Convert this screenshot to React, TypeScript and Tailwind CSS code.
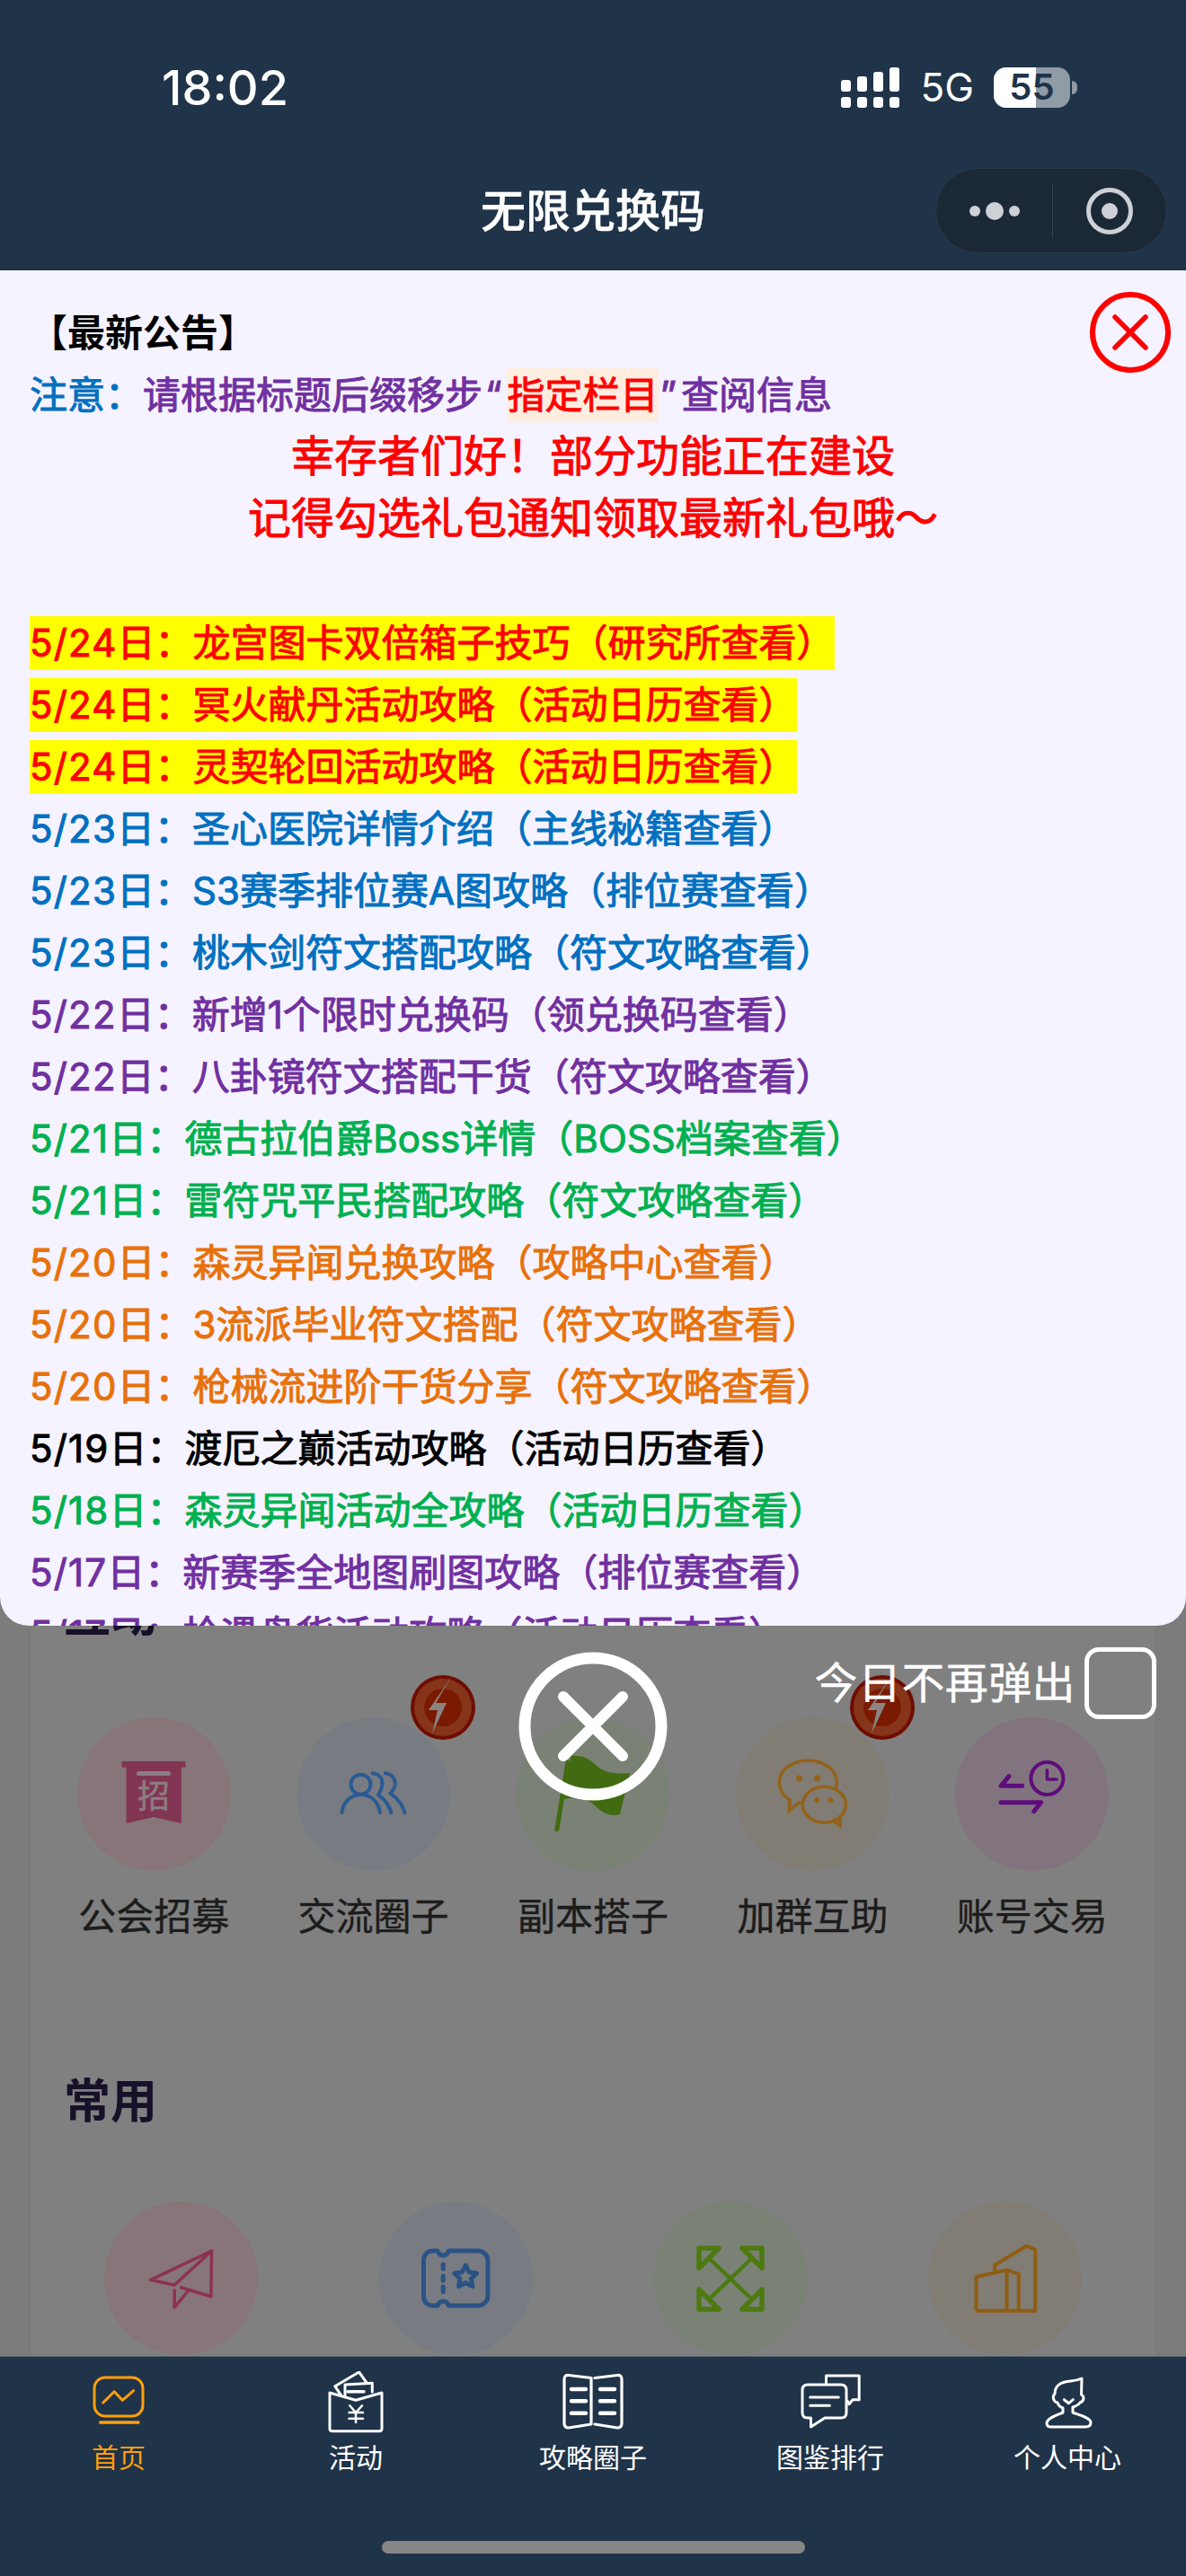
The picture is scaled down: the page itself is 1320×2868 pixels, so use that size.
const notices = [
  { date: "5/24", text: "日：龙宫图卡双倍箱子技巧（研究所查看）", color: "text-[#ff0000]", mark: true },
  { date: "5/24", text: "日：冥火献丹活动攻略（活动日历查看）", color: "text-[#ff0000]", mark: true },
  { date: "5/24", text: "日：灵契轮回活动攻略（活动日历查看）", color: "text-[#ff0000]", mark: true },
  { date: "5/23", text: "日：圣心医院详情介绍（主线秘籍查看）", color: "text-[#0070c0]" },
  { date: "5/23", text: "日：S3赛季排位赛A图攻略（排位赛查看）", color: "text-[#0070c0]" },
  { date: "5/23", text: "日：桃木剑符文搭配攻略（符文攻略查看）", color: "text-[#0070c0]" },
  { date: "5/22", text: "日：新增1个限时兑换码（领兑换码查看）", color: "text-[#7030a0]" },
  { date: "5/22", text: "日：八卦镜符文搭配干货（符文攻略查看）", color: "text-[#7030a0]" },
  { date: "5/21", text: "日：德古拉伯爵Boss详情（BOSS档案查看）", color: "text-[#00b050]" },
  { date: "5/21", text: "日：雷符咒平民搭配攻略（符文攻略查看）", color: "text-[#00b050]" },
  { date: "5/20", text: "日：森灵异闻兑换攻略（攻略中心查看）", color: "text-[#e8710a]" },
  { date: "5/20", text: "日：3流派毕业符文搭配（符文攻略查看）", color: "text-[#e8710a]" },
  { date: "5/20", text: "日：枪械流进阶干货分享（符文攻略查看）", color: "text-[#e8710a]" },
  { date: "5/19", text: "日：渡厄之巅活动攻略（活动日历查看）", color: "text-black" },
  { date: "5/18", text: "日：森灵异闻活动全攻略（活动日历查看）", color: "text-[#00b050]" },
  { date: "5/17", text: "日：新赛季全地图刷图攻略（排位赛查看）", color: "text-[#7030a0]" },
  { date: "5/17", text: "日：枪遇盘货活动攻略（活动日历查看）", color: "text-[#7030a0]" },
];

const BannerIcon = () => (
  <svg viewBox="0 0 171 171" className="w-full h-full">
    <path d="M49.5 49H120.5V55.7H115.8V118L85 111L54.5 118V55.7H49.5Z" fill="#823553" />
    <rect x="66" y="60" width="38" height="5" rx="2.5" fill="#8c7d80" />
    <text x="85" y="101" textAnchor="middle" fontSize="36" fontWeight="400" stroke="#8c7d80" strokeWidth="0.6" fill="#8c7d80">招</text>
  </svg>
);

const PeopleIcon = () => (
  <svg viewBox="0 0 171 171" className="w-full h-full" fill="none" stroke="#2a5a94" strokeWidth="4" strokeLinecap="round">
    <circle cx="71.5" cy="74.7" r="11" />
    <path d="M50.5 106C52 93 62 86 71.5 86C82 86 91 93 93 106" />
    <path d="M84.5 62.3C92 63 96 68 95.5 74.7C95 80 93 83 91 86.3C98 91 103 97 105.5 106.3" />
    <path d="M98.8 62.3C106 63 110 68 109.8 74.7C109.5 79 107 82 104.5 84.7C112 90 118 97 120.5 106.3" />
  </svg>
);

const FlagIcon = () => (
  <svg viewBox="0 0 171 171" className="w-full h-full">
    <path d="M61.5 43C74 42 82 46 89 53C98 62 110 63 127 62.3L116 108C106 111 98 107 90 100C80 90 70 88 53.5 91.3Z" fill="#406b10" />
    <path d="M45.9 124.7L58 50" stroke="#406b10" strokeWidth="5" strokeLinecap="round" />
  </svg>
);

const WechatIcon = () => (
  <svg viewBox="0 0 171 171" className="w-full h-full" fill="none" stroke="#93621a" strokeWidth="3.5">
    <path d="M60 92L59.5 104L70 95C75 96 85 96.5 90 95C104 92 112.4 83 112.4 72C112.4 58.7 98 48 80.4 48C62.7 48 48.4 58.7 48.4 72C48.4 80 52 87 60 92Z" />
    <ellipse cx="98.3" cy="97.3" rx="24" ry="20" fill="#817d74" />
    <path d="M108 115L116 120.7L115.5 109" />
    <g fill="#93621a" stroke="none">
      <circle cx="70.6" cy="68" r="3.6" />
      <circle cx="90.7" cy="68" r="3.6" />
      <circle cx="90.2" cy="92.3" r="3" />
      <circle cx="105.4" cy="92.3" r="3" />
    </g>
  </svg>
);

const ExchangeIcon = () => (
  <svg viewBox="0 0 171 171" className="w-full h-full" fill="none" stroke="#5f0c7d" strokeLinecap="round" strokeLinejoin="round">
    <circle cx="102.4" cy="68" r="18" strokeWidth="4" />
    <path d="M102.4 58.7V69H113" strokeWidth="3.5" />
    <path d="M74.7 76.3H51L60 65.7" strokeWidth="5" />
    <path d="M51 94.7H95.7L87.7 104.7" strokeWidth="5" />
  </svg>
);

const PlaneIcon = () => (
  <svg viewBox="0 0 171 171" className="w-full h-full" fill="none" stroke="#8d3152" strokeWidth="3.5" strokeLinecap="round" strokeLinejoin="round">
    <path d="M119.5 55L51.5 87.3L78.2 93Z" />
    <path d="M119.5 55L118.8 105.7L85.5 95.7" />
    <path d="M78.2 99V118L93.8 99" />
  </svg>
);

const TicketIcon = () => (
  <svg viewBox="0 0 171 171" className="w-full h-full" fill="none" stroke="#2a5285" strokeWidth="5" strokeLinecap="round" strokeLinejoin="round">
    <path d="M59.5 55H65Q67 60 71.2 60Q75.5 60 77.5 55H110A11 11 0 0 1 121 66V105A11 11 0 0 1 110 116H77.5Q75.5 111 71.2 111Q67 111 65 116H59.5A10 10 0 0 1 49.5 106V65A10 10 0 0 1 59.5 55Z" />
    <path d="M71.2 70V75M71.2 83V88M71.2 95V100.5" />
    <path d="M96.2 71L100 78.7L108.6 80L102.4 86L103.8 94.5L96.2 90.5L88.6 94.5L90 86L83.8 80L92.4 78.7Z" />
  </svg>
);

const ArrowsIcon = () => (
  <svg viewBox="0 0 171 171" className="w-full h-full" fill="none" stroke="#4c7a10" strokeWidth="5.5" strokeLinejoin="round" strokeLinecap="round">
    <path d="M51 52H73L51 74Z" />
    <path d="M121 52H99L121 74Z" />
    <path d="M51 120H73L51 98Z" />
    <path d="M121 120H99L121 98Z" />
    <path d="M62 63L110 109M110 63L62 109" strokeWidth="4.5" />
  </svg>
);

const BuildingIcon = () => (
  <svg viewBox="0 0 171 171" className="w-full h-full" fill="none" stroke="#8f5d12" strokeWidth="4" strokeLinejoin="round">
    <path d="M53.5 121.7V84L87.5 76.3V121.7" />
    <path d="M87.5 76.3L100.8 80.7V121.7" />
    <path d="M74.2 79V70.7L109.2 49.7L119.2 53.3V121.7H53.5" />
  </svg>
);

const HomeTab = () => (
  <svg viewBox="0 0 80 70" className="w-[80px] h-[70px]" fill="none" stroke="#ff9f0a" strokeWidth="3" strokeLinecap="round" strokeLinejoin="round">
    <rect x="13" y="7" width="54" height="43" rx="12" />
    <path d="M22.7 35L35.2 22.7L44.2 32.3L56.7 21.7" />
    <path d="M19.6 57H62" strokeWidth="3.5" />
  </svg>
);

const ActivityTab = () => (
  <svg viewBox="0 0 80 70" className="w-[80px] h-[70px]" fill="none" stroke="#fff" strokeWidth="3" strokeLinecap="round" strokeLinejoin="round">
    <path d="M11 24V64Q11 66.7 14 66.7H66Q69 66.7 69 64V24L40 32.3Z" />
    <path d="M23.5 26.7L16.8 16.7L43.6 1L52.5 13.3" />
    <path d="M28 27V15L58.3 13.3V23" />
    <path d="M31 22.7H49" strokeWidth="3.5" />
    <path d="M33.3 38.3L40 46L47 38.3M40 46V57M32.5 46H48M32.5 52.7H48" strokeWidth="2.5" />
  </svg>
);

const BookTab = () => (
  <svg viewBox="0 0 80 70" className="w-[80px] h-[70px]" fill="none" stroke="#fff" strokeWidth="3.2" strokeLinecap="round" strokeLinejoin="round">
    <path d="M8 9Q8 4 13 4.5L38 7.5V59L13 63Q8 63 8 58Z" />
    <path d="M42 7.5L67 4.5Q72 4 72 9V58Q72 63 67 63L42 59" />
    <path d="M16 20H32M16 33.3H32M16 46.7H32M48 20H64M48 33.3H64M48 46.7H64" strokeWidth="4.5" />
  </svg>
);

const ChatTab = () => (
  <svg viewBox="0 0 80 70" className="w-[80px] h-[70px]" fill="none" stroke="#fff" strokeWidth="3" strokeLinecap="round" strokeLinejoin="round">
    <path d="M15 15H52Q58 15 58 21V46Q58 52 52 52H34L18.5 62V52H15Q9 52 9 46V21Q9 15 15 15Z" />
    <path d="M35.5 14V5H72.2V31.7H65L61 36.7L59 33" />
    <path d="M17.7 29H49.3M17.7 38.3H39.4" />
  </svg>
);

const PersonTab = () => (
  <svg viewBox="0 0 80 70" className="w-[80px] h-[70px]" fill="none" stroke="#fff" strokeWidth="3" strokeLinecap="round" strokeLinejoin="round">
    <path d="M56 8C48 12 38 10 32 14C27 17 26 21 26 25C23 28 24 34 29 35C30 38 32 40 35 41V46C28 49 17 52 17 58C17 61 19 62 22 62H60C64 62 66 60 66 57C66 52 54 49 46 46V40C49 39 52 38 54 35C59 33 59 28 55.5 26Z" />
    <path d="M36.4 31.7L41.5 35.7L46.3 31.7" />
  </svg>
);

const BoltBadge = () => (
  <svg viewBox="0 0 72 74" className="absolute left-[127px] top-[-48px] w-[72px] h-[74px]">
    <circle cx="36" cy="37" r="36" fill="#6e0d00" />
    <circle cx="36" cy="37" r="32" fill="#86351b" />
    <circle cx="36" cy="37" r="21" fill="#7a1a00" />
    <path d="M46 2L28 32H40L24 66L30 40H20Z" fill="#8c8480" />
  </svg>
);

const topItems = [
  { label: "公会招募", bg: "bg-[#877579]", icon: <BannerIcon /> },
  { label: "交流圈子", bg: "bg-[#787c82]", icon: <PeopleIcon />, badge: true },
  { label: "副本搭子", bg: "bg-[#7a8175]", icon: <FlagIcon /> },
  { label: "加群互助", bg: "bg-[#817d74]", icon: <WechatIcon />, badge: true },
  { label: "账号交易", bg: "bg-[#81747e]", icon: <ExchangeIcon /> },
];

const commonItems = [
  { bg: "bg-[#877579]", icon: <PlaneIcon /> },
  { bg: "bg-[#787c82]", icon: <TicketIcon /> },
  { bg: "bg-[#7a8175]", icon: <ArrowsIcon /> },
  { bg: "bg-[#817d74]", icon: <BuildingIcon /> },
];

const tabs = [
  { label: "首页", icon: <HomeTab />, active: true },
  { label: "活动", icon: <ActivityTab /> },
  { label: "攻略圈子", icon: <BookTab /> },
  { label: "图鉴排行", icon: <ChatTab /> },
  { label: "个人中心", icon: <PersonTab /> },
];

const App = () => {
  return (
    <div className="relative h-[2868px] w-[1320px] flex flex-col overflow-hidden bg-[#7c7c7c] font-['Inter','Noto_Sans_CJK_SC',sans-serif]">
      <header className="h-[301px] shrink-0 bg-[#1f3349] text-white">
        <div className="h-[187px] flex items-center justify-between pt-[7px] pl-[180px] pr-[121px]">
          <span className="text-[54px] font-medium">18:02</span>
          <div className="flex items-center">
            <svg viewBox="0 0 65 45" className="w-[65px] h-[45px]" fill="#fff">
              <rect x="0" y="14" width="11" height="13" rx="3" />
              <rect x="18" y="10" width="11" height="17" rx="3" />
              <rect x="36" y="5" width="11" height="22" rx="3" />
              <rect x="54" y="0" width="11" height="27" rx="3" />
              <rect x="0" y="33" width="11" height="12" rx="3" />
              <rect x="18" y="33" width="11" height="12" rx="3" />
              <rect x="36" y="33" width="11" height="12" rx="3" />
              <rect x="54" y="33" width="11" height="12" rx="3" />
            </svg>
            <span className="ml-[23px] text-[44px]">5G</span>
            <div className="relative ml-[22px] w-[85px] h-[45px] rounded-[14px] bg-[#8f9ba5] flex items-center justify-center">
              <div className="absolute left-0 top-0 bottom-0 w-[47px] rounded-l-[14px] bg-white" />
              <span className="relative text-[40px] leading-none font-semibold text-[#1f3349]">55</span>
            </div>
            <div className="ml-[2px] w-[6px] h-[15px] rounded-r-full bg-[#8f9ba5]" />
          </div>
        </div>
        <div className="relative h-[95px] flex items-center justify-center">
          <span className="pt-[2px] text-[50px] font-medium [-webkit-text-stroke:0.5px_currentColor]">无限兑换码</span>
          <div className="absolute right-[21px] top-0 w-[258px] h-[95px] rounded-full bg-[#1b2937] border border-[#2c3b4a] flex items-center">
            <div className="w-[129px] flex items-center justify-center gap-[6px]">
              <span className="w-[12px] h-[12px] rounded-full bg-[#cdd0d6]" />
              <span className="w-[20px] h-[20px] rounded-full bg-[#cdd0d6]" />
              <span className="w-[12px] h-[12px] rounded-full bg-[#cdd0d6]" />
            </div>
            <div className="w-px h-[60px] bg-[#324252]" />
            <div className="flex-1 flex items-center justify-center">
              <div className="w-[52px] h-[52px] rounded-full border-[5px] border-[#cdd0d6] flex items-center justify-center">
                <span className="w-[18px] h-[18px] rounded-full bg-[#cdd0d6]" />
              </div>
            </div>
          </div>
        </div>
      </header>

      <main className="flex-1 overflow-hidden px-[33px]">
        <div className="h-full border-x border-[#787878] bg-[#808080] pt-[1463px] px-[15px]">
          <h2 className="h-[70px] pl-[22px] text-[52px] leading-[70px] font-bold text-[#171028]">互动</h2>
          <div className="mt-[78px] grid grid-cols-5">
            {topItems.map((item) => (
              <div key={item.label} className="flex flex-col items-center">
                <div className={`relative w-[171px] h-[171px] rounded-full ${item.bg}`}>
                  {item.icon}
                  {item.badge && <BoltBadge />}
                </div>
                <span className="mt-[21px] text-[42px] leading-[60px] text-[#1c1c1c] [-webkit-text-stroke:0.4px_currentColor]">{item.label}</span>
              </div>
            ))}
          </div>
          <h2 className="mt-[141px] h-[70px] pl-[22px] text-[52px] leading-[70px] font-bold text-[#171028]">常用</h2>
          <div className="mt-[76px] grid grid-cols-4">
            {commonItems.map((item, i) => (
              <div key={i} className="flex justify-center">
                <div className={`w-[171px] h-[171px] rounded-full ${item.bg}`}>{item.icon}</div>
              </div>
            ))}
          </div>
        </div>
      </main>

      <nav className="h-[245px] shrink-0 bg-[#1f3349] border-t border-[#5b6670] pt-[16px] flex relative">
        {tabs.map((tab) => (
          <div key={tab.label} className="flex-1 flex flex-col items-center">
            {tab.icon}
            <span className={`mt-[8px] text-[30px] leading-[36px] ${tab.active ? "text-[#ff9f0a]" : "text-white"}`}>
              {tab.label}
            </span>
          </div>
        ))}
        <div className="absolute left-[425px] top-[205px] w-[471px] h-[14px] rounded-full bg-[#878787]" />
      </nav>

      {/* popup, sits over the page */}
      <div className="absolute left-0 right-0 top-[301px] h-[1509px] overflow-hidden rounded-b-[32px] bg-[#f5f3ff] pt-[35px] px-[33px] [-webkit-text-stroke:1px_currentColor]">
        <p className="text-[42px] leading-[69px] font-bold text-black [-webkit-text-stroke:0]">【最新公告】</p>
        <p className="text-[42px] leading-[69px] text-[#7030a0]">
          <span className="text-[#0070c0]">注意：</span>
          请根据标题后缀移步<span className="pl-[3px] pr-[6px]">“</span>
          <span className="inline-block leading-[60px] bg-[#ffeddf] text-[#ff0000]">指定栏目</span>
          <span className="pl-[2px] pr-[5px]">”</span>查阅信息
        </p>
        <p className="text-[48px] leading-[69px] text-center text-[#ff0000] mt-[-1px]">幸存者们好！部分功能正在建设</p>
        <p className="text-[48px] leading-[69px] text-center text-[#ff0000]">记得勾选礼包通知领取最新礼包哦～</p>
        <div className="h-[70px]" />
        {notices.map((n, i) => (
          <p key={i} className={`text-[42px] leading-[69px] whitespace-nowrap ${n.color}`}>
            <span className={n.mark ? "inline-block leading-[60px] bg-[#ffff00]" : ""}>
              <span className="tracking-[1.2px]">{n.date}</span>
              {n.text}
            </span>
          </p>
        ))}
        <svg viewBox="0 0 90 90" className="absolute right-[17px] top-[24px] w-[90px] h-[90px]" fill="none" stroke="#ff0000">
          <circle cx="45" cy="45" r="42" strokeWidth="6" />
          <path d="M28 28L62 62M62 28L28 62" strokeWidth="5.5" strokeLinecap="round" />
        </svg>
      </div>

      <div className="absolute right-[33px] top-[1834px] flex items-center gap-[10px]">
        <span className="text-[48px] leading-[60px] text-white tracking-[0.4px] [-webkit-text-stroke:0.4px_currentColor]">今日不再弹出</span>
        <div className="w-[80px] h-[80px] rounded-[16px] border-[5px] border-white" />
      </div>

      <svg viewBox="0 0 166 166" className="absolute left-[577px] top-[1839px] w-[166px] h-[166px]" fill="none" stroke="#fff" strokeLinecap="round">
        <circle cx="83" cy="83" r="76" strokeWidth="13" />
        <path d="M50 50L116 116M116 50L50 116" strokeWidth="12" />
      </svg>
    </div>
  );
};

export default App;
